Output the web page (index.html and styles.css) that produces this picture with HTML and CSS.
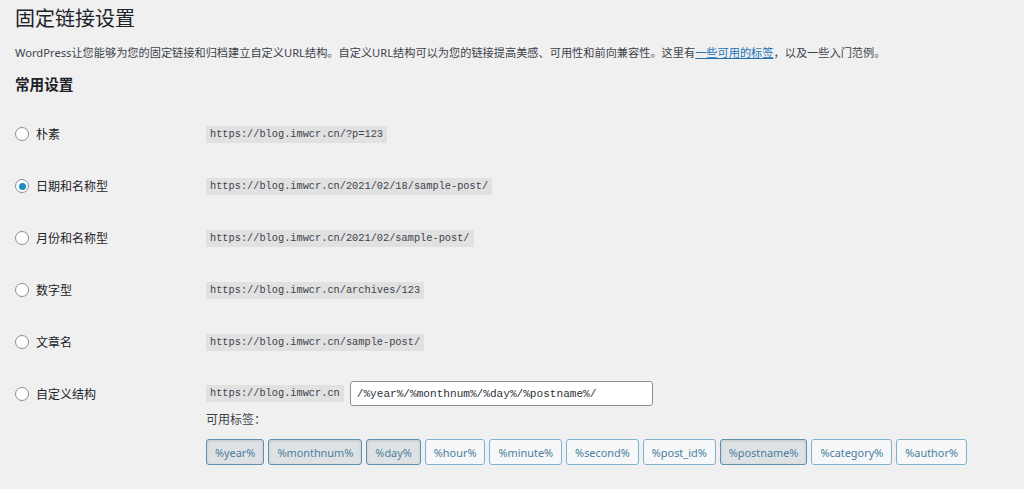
FILE: index.html
```html
<!DOCTYPE html>
<html lang="zh-CN">
<head>
<meta charset="utf-8">
<title>固定链接设置</title>
<link rel="stylesheet" href="styles.css">
</head>
<body>
<div class="wrap">
  <h1 class="title">固定链接设置</h1>
  <p class="intro">WordPress让您能够为您的固定链接和归档建立自定义URL结构。自定义URL结构可以为您的链接提高美感、可用性和前向兼容性。这里有<a href="#">一些可用的标签</a>，以及一些入门范例。</p>
  <h2 class="section">常用设置</h2>
  <div class="options">
    <div class="row">
      <label class="choice"><span class="radio"></span>朴素</label>
      <div class="value"><code class="url">https://blog.imwcr.cn/?p=123</code></div>
    </div>
    <div class="row">
      <label class="choice"><span class="radio checked"></span>日期和名称型</label>
      <div class="value"><code class="url">https://blog.imwcr.cn/2021/02/18/sample-post/</code></div>
    </div>
    <div class="row">
      <label class="choice"><span class="radio"></span>月份和名称型</label>
      <div class="value"><code class="url">https://blog.imwcr.cn/2021/02/sample-post/</code></div>
    </div>
    <div class="row">
      <label class="choice"><span class="radio"></span>数字型</label>
      <div class="value"><code class="url">https://blog.imwcr.cn/archives/123</code></div>
    </div>
    <div class="row">
      <label class="choice"><span class="radio"></span>文章名</label>
      <div class="value"><code class="url">https://blog.imwcr.cn/sample-post/</code></div>
    </div>
    <div class="row custom">
      <label class="choice"><span class="radio"></span>自定义结构</label>
      <div class="value">
        <div class="custom-line">
          <code class="url">https://blog.imwcr.cn</code>
          <input class="structure" type="text" value="/%year%/%monthnum%/%day%/%postname%/">
        </div>
        <div class="tags-label">可用标签：</div>
        <div class="tags">
          <button class="tag active">%year%</button>
          <button class="tag active">%monthnum%</button>
          <button class="tag active">%day%</button>
          <button class="tag">%hour%</button>
          <button class="tag">%minute%</button>
          <button class="tag">%second%</button>
          <button class="tag">%post_id%</button>
          <button class="tag active">%postname%</button>
          <button class="tag">%category%</button>
          <button class="tag">%author%</button>
        </div>
      </div>
    </div>
  </div>
</div>
</body>
</html>
```
FILE: styles.css
```css
html, body {
  margin: 0;
  padding: 0;
  background: #f0f0f1;
}
body {
  font-family: "Noto Sans", "Noto Sans CJK SC", sans-serif;
  color: #3c434a;
  font-size: 11.4px;
}
.wrap {
  padding: 6px 0 0 15px;
}
.title {
  margin: 0;
  font-size: 20px;
  font-weight: 400;
  line-height: 26px;
  color: #1d2327;
}
.intro {
  margin: 13px 0 0;
  font-size: 11.2px;
  line-height: 16px;
}
.intro a {
  color: #2271b1;
  text-decoration: underline;
}
.section {
  margin: 13px 0 0;
  font-size: 14.6px;
  line-height: 20px;
  font-weight: 600;
  color: #1d2327;
}
.options {
  margin-top: 14px;
}
.row {
  display: grid;
  grid-template-columns: 191px 1fr;
  height: 52px;
  align-items: center;
}
.row.custom {
  align-items: start;
  height: auto;
  padding-top: 13px;
}
.choice {
  display: flex;
  align-items: center;
  gap: 7px;
  font-size: 12px;
  color: #1d2327;
}
.row.custom .choice {
  height: 25px;
}
.radio {
  box-sizing: border-box;
  width: 14px;
  height: 14px;
  border-radius: 50%;
  border: 1px solid #8c8f94;
  background: #fff;
  display: inline-flex;
  align-items: center;
  justify-content: center;
}
.radio.checked::after {
  content: "";
  width: 7px;
  height: 7px;
  border-radius: 50%;
  background: #1e8cbe;
}
.url {
  display: inline-block;
  font-family: "Liberation Mono", monospace;
  font-size: 10.3px;
  line-height: 17px;
  padding: 0 4px;
  background: #e1e1e2;
  color: #3c434a;
}
.custom-line {
  display: flex;
  align-items: center;
  gap: 6px;
  height: 25px;
}
.structure {
  box-sizing: border-box;
  width: 303px;
  height: 25px;
  padding: 0 6px;
  border: 1px solid #8c8f94;
  border-radius: 3px;
  background: #fff;
  font-family: "Liberation Mono", monospace;
  font-size: 11.1px;
  color: #2c3338;
}
.tags-label {
  margin-top: 6px;
  font-size: 12px;
  line-height: 16px;
}
.tags {
  display: flex;
  gap: 4px;
  margin-top: 11px;
}
.tag {
  box-sizing: border-box;
  height: 26px;
  padding: 0 8px;
  border: 1px solid #7fb2cc;
  border-radius: 3px;
  background: #f5f7f8;
  color: #4a7e9c;
  font-family: "Noto Sans", sans-serif;
  font-size: 10.9px;
  cursor: pointer;
}
.tag.active {
  background: #dfe2e5;
  border-color: #5b91ab;
  box-shadow: inset 0 1px 3px rgba(0, 0, 0, 0.12);
}
```
